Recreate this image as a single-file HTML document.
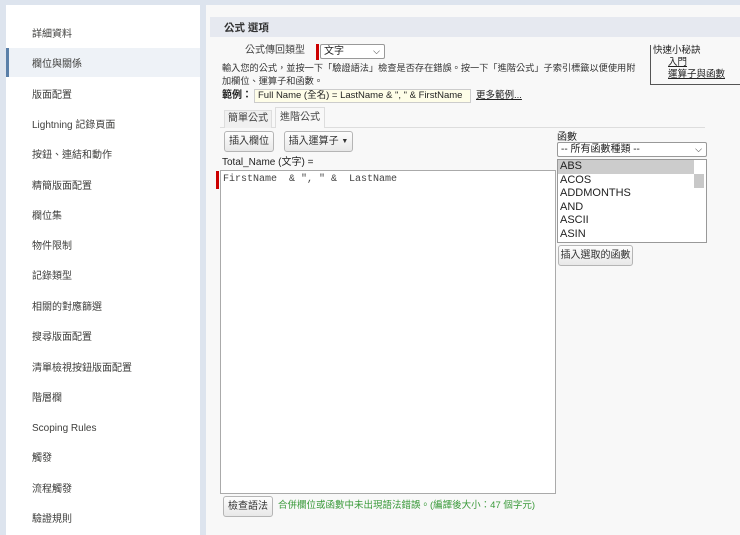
<!DOCTYPE html>
<html><head><meta charset="utf-8"><style>
*{box-sizing:border-box;margin:0;padding:0}
body{width:740px;height:528px;overflow:hidden;background:#dde4ee;font-family:"Liberation Sans","Noto Sans CJK TC",sans-serif;font-size:11px;color:#222;position:relative}
.a{position:absolute}
#side{left:6px;top:5px;width:194px;height:530px;background:#fff}
.it{position:absolute;left:26px;font-size:10px;color:#3e3e3c;white-space:nowrap;line-height:14px;margin-top:2px}
#main{left:206px;top:5px;width:534px;height:530px;background:#f8f8f8}
.btn{position:absolute;border:1px solid #b5b5b5;border-radius:3px;background:linear-gradient(#fdfdfd,#e8e8e8);font-size:10px;text-align:center;color:#333}
.sel{position:absolute;border:1px solid #999;background:#fff;font-size:10px;padding-left:3px;border-radius:2px;white-space:nowrap}
.lb div{height:13.6px;line-height:13.6px;padding-left:2px;font-size:11px}
</style></head><body>
<div class="a" id="side">
<div class="a" style="left:0;top:43px;width:194px;height:29px;background:#eef2f7"></div>
<div class="a" style="left:0;top:43px;width:3px;height:29px;background:#5a7fa8"></div>
<div class="it" style="top:21px">詳細資料</div>
<div class="it" style="top:51px">欄位與關係</div>
<div class="it" style="top:82px">版面配置</div>
<div class="it" style="top:112px">Lightning 記錄頁面</div>
<div class="it" style="top:142px">按鈕、連結和動作</div>
<div class="it" style="top:173px">精簡版面配置</div>
<div class="it" style="top:203px">欄位集</div>
<div class="it" style="top:233px">物件限制</div>
<div class="it" style="top:263px">記錄類型</div>
<div class="it" style="top:294px">相關的對應篩選</div>
<div class="it" style="top:324px">搜尋版面配置</div>
<div class="it" style="top:355px">清單檢視按鈕版面配置</div>
<div class="it" style="top:385px">階層欄</div>
<div class="it" style="top:415px">Scoping Rules</div>
<div class="it" style="top:445px">觸發</div>
<div class="it" style="top:476px">流程觸發</div>
<div class="it" style="top:506px">驗證規則</div>
</div>
<div class="a" id="main"></div>
<div class="a" style="left:210px;top:17px;width:530px;height:20px;background:#e6e9f0"></div>
<div class="a" style="left:224px;top:20px;font-size:10.5px;font-weight:bold;color:#333">公式 選項</div>
<div class="a" style="left:245px;top:45px;font-size:10px;line-height:12px;color:#444">公式傳回類型</div>
<div class="a" style="left:316px;top:44px;width:3px;height:16px;background:#c00"></div>
<div class="sel" style="left:320px;top:44px;width:65px;height:15px;line-height:13px">文字<span style="position:absolute;right:4px;top:0;font-size:9px">&#x2335;</span></div>
<div class="a" style="left:650px;top:45px;width:90px;height:40px;border-left:1px solid #555;border-bottom:1px solid #555;font-size:9.5px;line-height:12px;padding-left:2px;white-space:nowrap">快速小秘訣<br><u style="margin-left:15px">入門</u><br><u style="margin-left:15px">運算子與函數</u></div>
<div class="a" style="left:222px;top:62px;font-size:9.2px;line-height:12.5px;color:#333;width:422px">輸入您的公式，並按一下「驗證語法」檢查是否存在錯誤。按一下「進階公式」子索引標籤以便使用附加欄位、運算子和函數。</div>
<div class="a" style="left:222px;top:90px;font-size:10px;line-height:12px;font-weight:bold">範例：</div>
<div class="a" style="left:254px;top:89px;width:217px;height:14px;border:1px solid #ccc;background:#fefde8;font-size:9.5px;line-height:12px;padding-left:3px;white-space:nowrap;overflow:hidden">Full Name (全名) = LastName &amp; ", " &amp; FirstName</div>
<div class="a" style="left:476px;top:90px;font-size:9.5px;line-height:12px;text-decoration:underline">更多範例...</div>
<div class="a" style="left:220px;top:127px;width:485px;height:1px;background:#ddd"></div>
<div class="a" style="left:224px;top:110px;width:48px;height:18px;border:1px solid #ddd;border-bottom:none;background:#f0f0f0;font-size:10px;text-align:center;line-height:16px;color:#444">簡單公式</div>
<div class="a" style="left:275px;top:107px;width:50px;height:21px;border:1px solid #ddd;border-bottom:none;background:#f8f8f8;font-size:10px;text-align:center;line-height:20px;color:#444">進階公式</div>
<div class="btn" style="left:224px;top:131px;width:50px;height:21px;line-height:19px">插入欄位</div>
<div class="btn" style="left:284px;top:131px;width:69px;height:21px;line-height:19px">插入運算子 <span style="font-size:7px;vertical-align:top">▼</span></div>
<div class="a" style="left:222px;top:157px;font-size:10px;line-height:12px">Total_Name (文字) =</div>
<div class="a" style="left:216px;top:171px;width:3px;height:18px;background:#c00"></div>
<div class="a" style="left:220px;top:170px;width:336px;height:324px;border:1px solid #aaa;background:#fff;font-family:'Liberation Mono',monospace;font-size:10px;padding:3px 2px;white-space:pre;color:#444">FirstName  &amp; ", " &amp;  LastName</div>
<div class="a" style="left:557px;top:128px;font-size:10px">函數</div>
<div class="sel" style="left:557px;top:142px;width:150px;height:15px;line-height:13px">-- 所有函數種類 --<span style="position:absolute;right:4px;top:0;font-size:9px">&#x2335;</span></div>
<div class="a lb" style="left:557px;top:159px;width:150px;height:84px;border:1px solid #999;background:#fff;overflow:hidden">
<div style="background:#ccc;width:136px">ABS</div><div>ACOS</div><div>ADDMONTHS</div><div>AND</div><div>ASCII</div><div>ASIN</div>
<div class="a" style="right:2px;top:14px;width:10px;height:14px;background:#c8c8c8"></div>
</div>
<div class="btn" style="left:558px;top:245px;width:75px;height:21px;line-height:19px">插入選取的函數</div>
<div class="btn" style="left:223px;top:496px;width:50px;height:21px;line-height:19px">檢查語法</div>
<div class="a" style="left:278px;top:500px;font-size:9.5px;line-height:12px;color:#3a9a3a;white-space:nowrap">合併欄位或函數中未出現語法錯誤。(編譯後大小：47 個字元)</div>
</body></html>
